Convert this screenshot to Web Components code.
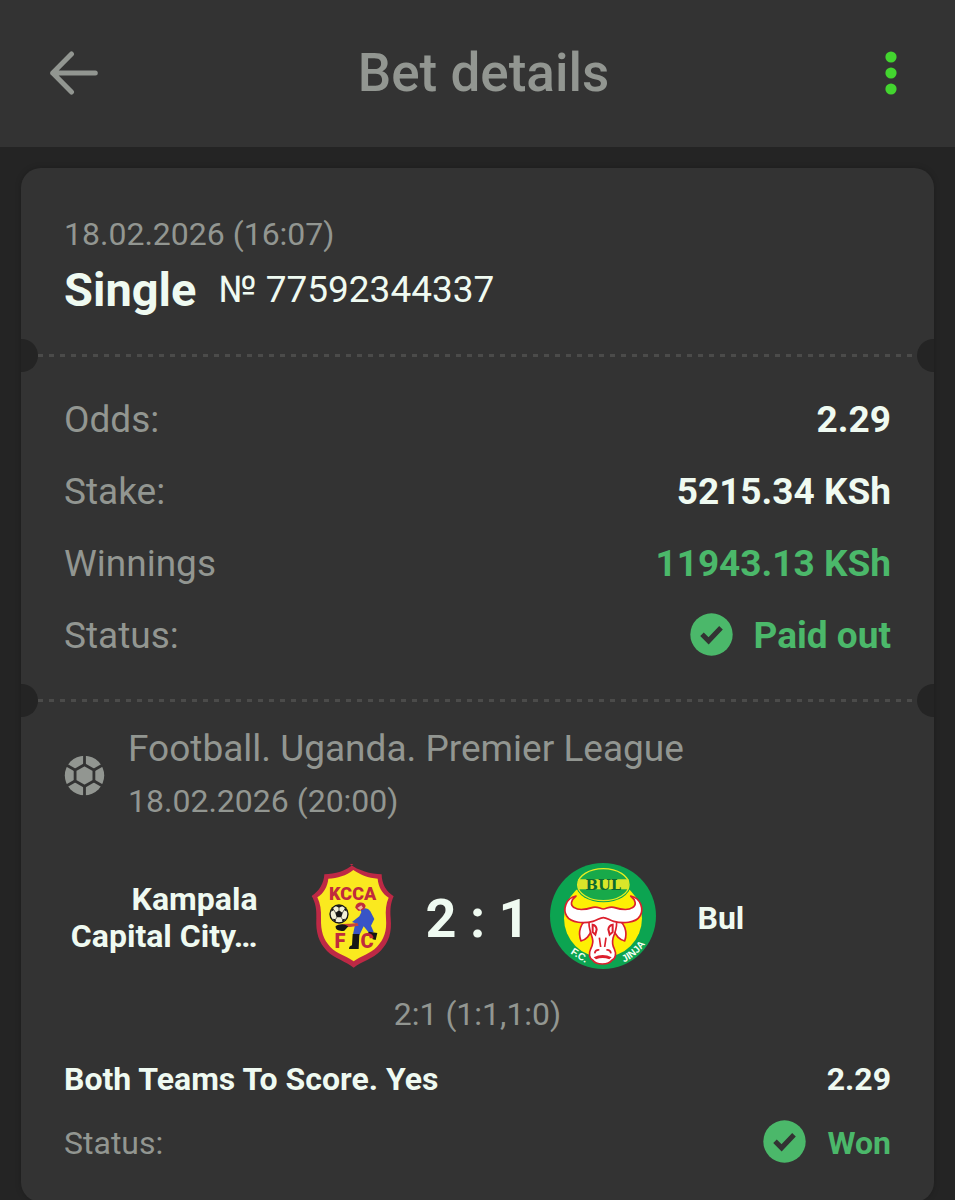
<!DOCTYPE html>
<html lang="en">
<head>
<meta charset="utf-8">
<meta name="viewport" content="width=device-width, initial-scale=1">
<title>Bet details</title>
<style>
  :root {
    --page: #242424;
    --surface: #333333;
    --muted: #929691;
    --text: #effaf1;
    --green: #4bb86a;
    --accent: #43d52f;
    --dash: #4b4b4a;
  }
  body {
    margin: 0;
    background: var(--page);
    color: var(--text);
    font-family: Roboto, "Liberation Sans", sans-serif;
  }
</style>
</head>
<body>
<bet-page></bet-page>

<script>
// small helper: every element here only needs an open root with static markup
class BaseElement extends HTMLElement {
  constructor() {
    super();
    this.attachShadow({mode: 'open'});
  }

  connectedCallback() {
    this.shadowRoot.innerHTML = `<style>${this._getStyles()}</style>${this._getInnerHTML()}`;
  }
}

// top bar with back and menu buttons
class BetHeader extends BaseElement {
  _getStyles() {
    return `
      :host {
        display: block;
        background: var(--surface);
      }
      header {
        display: flex;
        align-items: center;
        justify-content: space-between;
        box-sizing: border-box;
        min-height: 147px;
        padding: 0 40px 2px;
      }
      button {
        display: flex;
        align-items: center;
        justify-content: center;
        width: 68px;
        height: 68px;
        padding: 0;
        border: 0;
        background: none;
        color: var(--muted);
      }
      button.menu {
        width: 48px;
        margin: 0 0 0 8px;
        color: var(--accent);
      }
      h1 {
        margin: 0;
        color: var(--muted);
        font-size: 53px;
        line-height: 64px;
        font-weight: 500;
      }
    `;
  }

  _getInnerHTML() {
    return `
      <header>
        <button type="button" aria-label="Back">
          <svg width="48" height="44" viewBox="0 0 48 44" fill="none" stroke="currentColor"
            stroke-width="5" stroke-linecap="round" stroke-linejoin="round">
            <path d="M21.5 3 2.7 22l18.8 19M2.7 22h42.6"/>
          </svg>
        </button>
        <h1><slot></slot></h1>
        <button type="button" class="menu" aria-label="More">
          <svg width="12" height="44" viewBox="0 0 12 44" fill="currentColor">
            <circle cx="6" cy="6" r="5.6"/>
            <circle cx="6" cy="22" r="5.6"/>
            <circle cx="6" cy="38" r="5.6"/>
          </svg>
        </button>
      </header>
    `;
  }
}

// dashed tear line with a notch on both sides
class TicketDivider extends BaseElement {
  _getStyles() {
    return `
      :host {
        display: block;
        position: relative;
        height: 3px;
        padding: 0 17px;
      }
      .line {
        height: 3px;
        background: repeating-linear-gradient(90deg, var(--dash) 0 5px, transparent 5px 11px);
      }
      .notch {
        position: absolute;
        top: -15px;
        width: 17px;
        height: 33px;
        background: var(--page);
      }
      .left {
        left: 0;
        border-radius: 0 17px 17px 0;
      }
      .right {
        right: 0;
        border-radius: 17px 0 0 17px;
      }
    `;
  }

  _getInnerHTML() {
    return `
      <div class="line"></div>
      <span class="notch left"></span>
      <span class="notch right"></span>
    `;
  }
}

// label on the left, value on the right
class BetRow extends BaseElement {
  _getStyles() {
    return `
      :host {
        display: flex;
        align-items: center;
        justify-content: space-between;
        min-height: 72px;
        font-size: 37px;
        line-height: 44px;
      }
      :host([small]) {
        min-height: 64px;
        font-size: 32px;
      }
      .label {
        color: var(--muted);
      }
      :host([strong]) .label {
        color: var(--text);
        font-weight: 700;
      }
      .value {
        display: flex;
        align-items: center;
        font-weight: 700;
      }
      :host([win]) .value {
        color: var(--green);
      }
      svg {
        margin: 0 21px 3px 0;
      }
    `;
  }

  _getCheckIcon() {
    if (!this.hasAttribute('check')) {
      return '';
    }
    return `
      <svg width="43" height="43" viewBox="0 0 43 43" aria-hidden="true">
        <circle cx="21.5" cy="21.5" r="21.2" fill="var(--green)"/>
        <path d="m12 21.2 6.6 6.6 12.4-13" fill="none" stroke="var(--surface)" stroke-width="5"/>
      </svg>
    `;
  }

  _getInnerHTML() {
    return `
      <span class="label">${this.getAttribute('label')}</span>
      <span class="value">${this._getCheckIcon()}<slot></slot></span>
    `;
  }
}

class TeamCrest extends BaseElement {
  _getStyles() {
    return `
      :host {
        display: block;
      }
      svg {
        display: block;
        width: 100%;
      }
    `;
  }

  _getKcca() {
    return `
      <svg viewBox="0 24 318 318" role="img" aria-label="Kampala Capital City crest">
        <path d="M160 27C139 48 105 57 73 58 72 85 57 109 35 123 47 144 50 163 49 190c-2 43 7 72 32 98 23 23 57 31 80 50 23-19 58-27 81-51 25-26 34-55 30-98-2-27 0-45 9-65-22-14-36-37-36-66-33-1-70-11-96-31Z" fill="#bd2945"/>
        <path d="M160 45C139 62 112 70 85 71 83 94 71 115 52 127c9 19 12 39 11 63-1 39 7 64 28 86 20 21 49 27 70 43 21-16 50-23 70-44 21-22 30-46 27-85-2-24 0-45 8-62-20-12-31-33-33-57-29-2-51-11-73-26Z" fill="#fae91f"/>
        <text x="158" y="136" text-anchor="middle" font-family="Roboto, sans-serif" font-weight="900" font-size="54" fill="#c02b3c">KCCA</text>
        <g>
          <circle cx="117" cy="177" r="29" fill="#161616"/>
          <circle cx="117" cy="177" r="25" fill="#f2f0d8"/>
          <path d="m117 166 11 8-4 13h-14l-4-13ZM107 153l10 5 11-5-4-2h-14ZM93 170l9-5-3-7q-6 5-6 12ZM141 170l-9-5 3-7q6 5 6 12ZM98 191l9 2 1 7q-7-2-10-9ZM136 191l-9 2-1 7q7-2 10-9Z" fill="#161616"/>
          <path d="M117 157v9M102 165l5 9M132 165l-5 9M107 193l3-6M127 193l-3-6" stroke="#161616" stroke-width="2"/>
        </g>
        <text x="120" y="278" text-anchor="middle" font-family="Roboto, sans-serif" font-weight="900" font-size="60" fill="#c02b3c">F</text>
        <path d="M182 165q18-12 29 4l12 23-10 20 8 18-11 7-19-23-13 27-19-3 7-33-10-4 22-17 6-12Z" fill="#3854c6"/>
        <path d="M166 158c0-17 26-22 31-5l-4 10-17 5-6-5Z" fill="#c02b3c"/>
        <path d="m172 159 12-8 5 7-8 7Z" fill="#f0b39a"/>
        <path d="m126 207 23-1 23-2 4 8-25 4-24 1Z" fill="#c8433a"/>
        <path d="M106 214c12-9 26-8 39 0l-12 13c-13 2-27 0-26-13Z" fill="#161616"/>
        <path d="M158 237h20l-2 45h-29q0-9 9-11ZM207 230l25 4-5 21-9-2-2-10-18-1Z" fill="#161616"/>
        <text x="201" y="278" text-anchor="middle" font-family="Roboto, sans-serif" font-weight="900" font-size="60" fill="#c02b3c">C</text>
      </svg>
    `;
  }

  _getBul() {
    return `
      <svg viewBox="15 24 318 318" role="img" aria-label="Bul crest">
        <circle cx="174" cy="183" r="159" fill="#0ca451"/>
        <circle cx="174" cy="190" r="117" fill="#fdf004"/>
        <ellipse cx="175" cy="89" rx="82" ry="53" fill="#0ca451"/>
        <ellipse cx="175" cy="89" rx="77" ry="48" fill="#18a94a" stroke="#e7ed22" stroke-width="4"/>
        <path d="M99 73h152v30H99Z" fill="#d9e62a"/>
        <text x="175" y="104" text-anchor="middle" font-family="'DejaVu Serif', serif" font-weight="700" font-size="44" fill="#0b6b31">BUL</text>
        <g fill="#fff" stroke="#dc1f2d" stroke-width="5" stroke-linejoin="round">
          <path d="M132 194c-13-1-20 10-25 23-5 14-3 31 1 41 14-3 28-17 31-34ZM213 194c13-1 20 10 26 23 5 14 4 31 0 41-14-3-29-17-32-34Z"/>
          <path d="M133 193c12-4 24-8 40-8s29 4 41 8c5 21-5 40-10 57-3 12-1 22 4 32 7 15 3 30-7 33-5 8-16 12-29 12s-24-4-29-12c-10-4-13-19-6-33 6-11 8-22 5-33-5-18-14-36-9-56Z"/>
          <path d="M93 123C60 130 54 165 65 183 78 205 118 206 144 199 158 195 165 188 175 188S192 195 206 199C232 206 272 205 285 183 296 165 290 130 257 123 272 135 276 150 262 158 248 168 222 162 206 157 193 153 184 162 175 162S157 153 144 157C128 162 102 168 88 158 74 150 78 135 93 123Z"/>
        </g>
        <path d="M143 209c7 1 11 7 12 14l-4 16-8-8ZM203 209c-8 1-12 7-13 14l4 16 9-8Z" fill="#fff" stroke="#dc1f2d" stroke-width="6"/>
        <path d="M149 295q2-12 14-10M198 295q-2-12-14-10M163 248l4 28M183 248l-4 28" fill="none" stroke="#dc1f2d" stroke-width="5"/>
        <path d="M146 307q27-14 54 0l-7 6q-20-8-40 0Z" fill="#dc1f2d"/>
        <g fill="#f6fff4" font-family="'Liberation Sans', sans-serif" font-weight="700" font-size="30">
          <text transform="translate(76 295) rotate(33)">F.C.</text>
          <path id="arc" d="M237 322A152 152 0 0 0 311 248" fill="none"/>
          <text><textPath href="#arc">JINJA</textPath></text>
        </g>
      </svg>
    `;
  }

  _getInnerHTML() {
    return this.getAttribute('team') === 'kcca' ? this._getKcca() : this._getBul();
  }
}

// two teams with the score between them
class MatchScore extends BaseElement {
  _getStyles() {
    return `
      :host {
        display: grid;
        grid-template-columns: 1fr 106px 144px 106px 1fr;
        align-items: center;
        font-size: 32px;
        line-height: 37px;
        font-weight: 700;
      }
      .home {
        padding-right: 42px;
        text-align: right;
      }
      .away {
        padding-left: 42px;
      }
      .score {
        padding-top: 6px;
        text-align: center;
        font-size: 54px;
        line-height: 64px;
        font-weight: 700;
      }
      .name {
        padding-top: 4px;
      }
    `;
  }

  _getInnerHTML() {
    return `
      <div class="name home"><slot name="home"></slot></div>
      <team-crest team="kcca"></team-crest>
      <div class="score"><slot></slot></div>
      <team-crest team="bul"></team-crest>
      <div class="name away"><slot name="away"></slot></div>
    `;
  }
}

// sport icon, league name and kick-off time
class LeagueInfo extends BaseElement {
  _getStyles() {
    return `
      :host {
        display: flex;
        align-items: center;
        gap: 23px;
        color: var(--muted);
        line-height: 52px;
      }
      .league {
        font-size: 37px;
      }
      .time {
        font-size: 32px;
      }
    `;
  }

  _getInnerHTML() {
    return `
      <svg width="41" height="41" viewBox="-20.5 -20.5 41 41" aria-hidden="true">
        <circle r="19.7" fill="currentColor"/>
        <g fill="none" stroke="var(--surface)" stroke-width="2.8">
          <path d="M0-10.8 9.4-5.4V5.4L0 10.8-9.4 5.4V-5.4Z"/>
          <path d="M0-10V-21M0 10V21M8.6-5l10-5.8M8.6 5l10 5.8M-8.6-5l-10-5.8M-8.6 5l-10 5.8"/>
        </g>
      </svg>
      <div>
        <div class="league"><slot></slot></div>
        <div class="time"><slot name="time"></slot></div>
      </div>
    `;
  }
}

class BetTicket extends BaseElement {
  _getStyles() {
    return `
      :host {
        display: block;
        margin: 21px;
        border-radius: 20px;
        background: var(--surface);
        box-shadow: 0 0 6px rgba(0, 0, 0, 0.2);
      }
      section {
        padding: 27px 43px;
      }
      .summary {
        padding-top: 44px;
        padding-bottom: 30px;
      }
      .date {
        color: var(--muted);
        font-size: 32px;
        line-height: 44px;
      }
      h2 {
        display: flex;
        align-items: center;
        gap: 22px;
        margin: 0;
        font-size: 47px;
        line-height: 68px;
        font-weight: 700;
      }
      h2 .number {
        font-size: 37px;
        font-weight: 400;
      }
      .event {
        padding-top: 21px;
      }
      match-score {
        margin: 36px 0 23px;
      }
      .periods {
        margin-bottom: 11px;
        color: var(--muted);
        font-size: 32px;
        line-height: 44px;
        text-align: center;
      }
    `;
  }

  _getInnerHTML() {
    return `
      <section class="summary">
        <div class="date">18.02.2026 (16:07)</div>
        <h2>Single <span class="number">№ 77592344337</span></h2>
      </section>
      <ticket-divider></ticket-divider>
      <section>
        <bet-row label="Odds:">2.29</bet-row>
        <bet-row label="Stake:">5215.34 KSh</bet-row>
        <bet-row label="Winnings" win>11943.13 KSh</bet-row>
        <bet-row label="Status:" win check>Paid out</bet-row>
      </section>
      <ticket-divider></ticket-divider>
      <section class="event">
        <league-info>Football. Uganda. Premier League<span slot="time">18.02.2026 (20:00)</span></league-info>
        <match-score>
          <span slot="home">Kampala<br>Capital City…</span>
          2 : 1
          <span slot="away">Bul</span>
        </match-score>
        <div class="periods">2:1 (1:1,1:0)</div>
        <bet-row label="Both Teams To Score. Yes" small strong>2.29</bet-row>
        <bet-row label="Status:" small win check>Won</bet-row>
      </section>
    `;
  }
}

class BetPage extends BaseElement {
  _getStyles() {
    return `
      :host {
        display: block;
      }
      main {
        display: flow-root;
      }
    `;
  }

  _getInnerHTML() {
    return `
      <bet-header>Bet details</bet-header>
      <main>
        <bet-ticket></bet-ticket>
      </main>
    `;
  }
}

customElements.define('bet-header', BetHeader);
customElements.define('ticket-divider', TicketDivider);
customElements.define('bet-row', BetRow);
customElements.define('team-crest', TeamCrest);
customElements.define('match-score', MatchScore);
customElements.define('league-info', LeagueInfo);
customElements.define('bet-ticket', BetTicket);
customElements.define('bet-page', BetPage);
</script>
</body>
</html>
